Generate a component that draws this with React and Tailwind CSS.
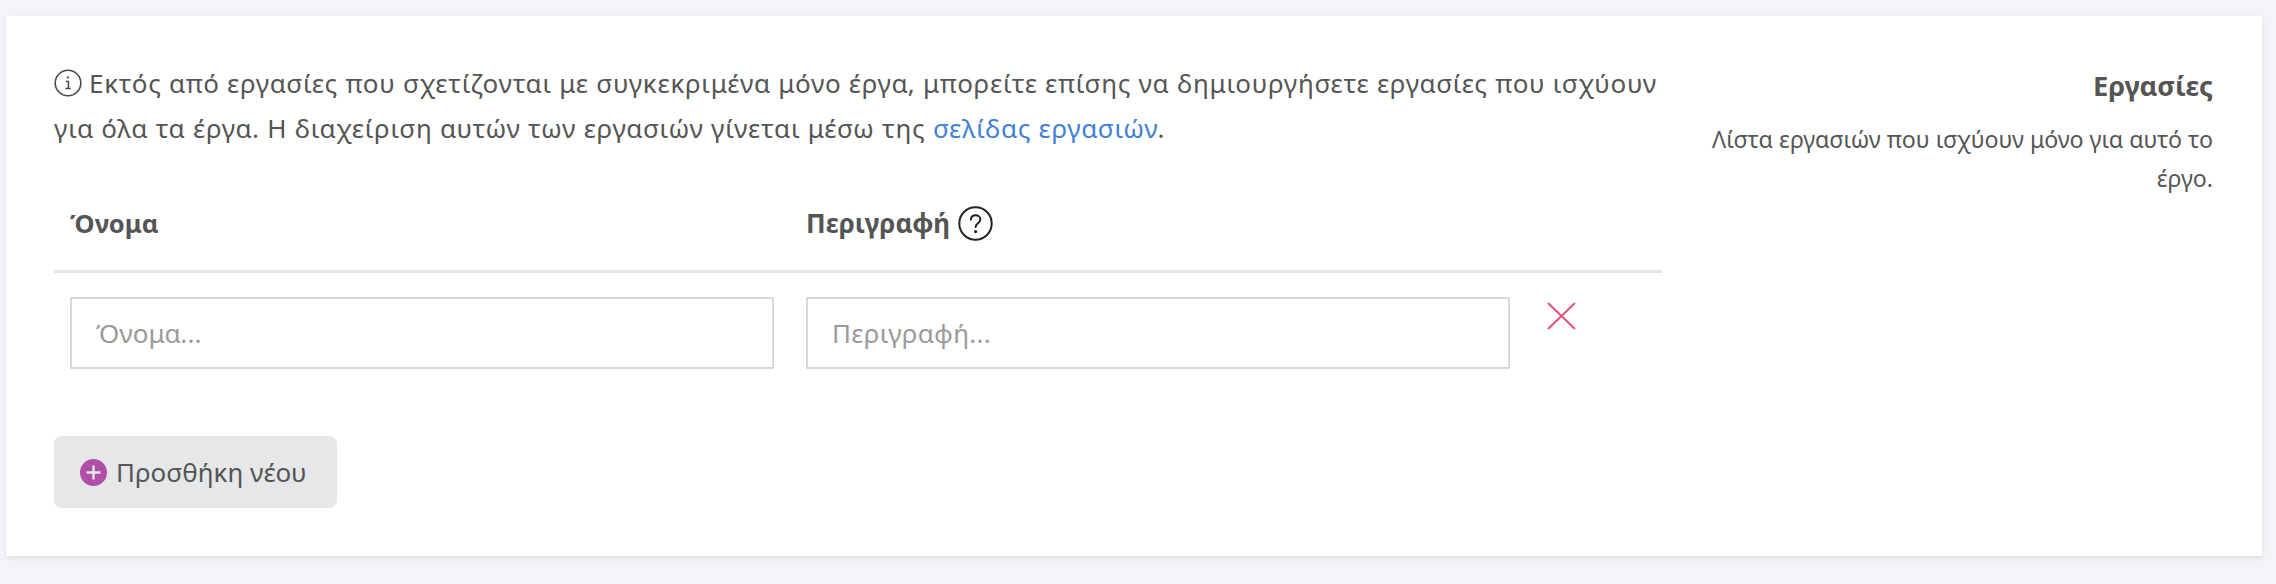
import React from 'react';

const font = { fontFamily: '"Noto Sans", sans-serif' };

function InfoIcon() {
    return (
        <svg viewBox="0 0 28 28" className="w-7 h-7 inline-block align-[-4px] mr-[7px]" fill="none" stroke="#4a4a4a" strokeWidth="1.6">
            <circle cx="14" cy="14" r="12.8" />
            <path d="M11.8 12.400h2.600v7M11.400 19.600h5.400" strokeWidth="1.500" />
            <circle cx="13.800" cy="8.400" r="1.100" fill="#4a4a4a" stroke="none" />
        </svg>
    );
}

function HelpIcon() {
    return (
        <svg viewBox="0 0 35 35" className="w-[35px] h-[35px]" fill="none" stroke="#222" strokeWidth="2">
            <circle cx="17.500" cy="17.500" r="16.200" />
            <path d="M12.800 13.600c.3-2.700 2.200-4.300 4.800-4.300 2.700 0 4.700 1.700 4.700 4.100 0 3.600-4.700 3.900-4.700 7.500" strokeLinecap="round" />
            <circle cx="17.600" cy="25.600" r="1.600" fill="#222" stroke="none" />
        </svg>
    );
}

export default function App() {
    return (
        <div style={font} className="min-h-screen bg-[#f3f4f8] pt-4 pl-[6px] pr-[14px] text-[#555555]">
            <div className="flex h-[540px] bg-white shadow-[0_2px_5px_rgba(0,0,0,0.09)] pt-[45px] pl-12 pr-[49px]">
                <div className="w-[1608px] shrink-0">
                    <p className="text-[26px] leading-[45px] tracking-[0.72px]">
                        <InfoIcon />
                        Εκτός από εργασίες που σχετίζονται με συγκεκριμένα μόνο έργα, μπορείτε επίσης να δημιουργήσετε εργασίες που ισχύουν για όλα τα έργα. Η διαχείριση αυτών των εργασιών γίνεται μέσω της <a className="text-[#3f80d8]">σελίδας εργασιών</a>.
                    </p>
                    <div className="grid grid-cols-[736px_736px_1fr] mt-[33px] border-b-[3px] border-[#e4e4ea] h-[89px]">
                        <div className="pl-4 pt-[21px] text-[25.500px] leading-[36px] font-bold">Όνομα</div>
                        <div className="pl-4 pt-[21px] flex items-center self-start gap-2 text-[26px] leading-[36px] font-bold">
                            Περιγραφή
                            <HelpIcon />
                        </div>
                    </div>
                    <div className="grid grid-cols-[736px_736px_1fr] pt-6">
                        <div className="px-4">
                            <input placeholder="Όνομα..." className="w-full h-[72px] border-2 border-[#d9d9dd] px-6 text-[26px] tracking-[0.1px] placeholder:text-[#9a9a9a] outline-none" />
                        </div>
                        <div className="px-4">
                            <input placeholder="Περιγραφή..." className="w-full h-[72px] border-2 border-[#d9d9dd] px-6 text-[26px] tracking-[0.300px] placeholder:text-[#9a9a9a] outline-none" />
                        </div>
                        <div className="pl-[21px] pt-[5px]">
                            <svg viewBox="0 0 29 28" className="w-[29px] h-7" fill="none" stroke="#e4507a" strokeWidth="2">
                                <path d="M1 1l27 26M28 1L1 27" />
                            </svg>
                        </div>
                    </div>
                    <button className="mt-[67px] flex items-center gap-[9px] h-[72px] w-[283px] pl-[26px] bg-[#e6e7e9] rounded-lg text-[26px]">
                        <svg viewBox="0 0 27 27" className="w-[27px] h-[27px]">
                            <circle cx="13.500" cy="13.500" r="13.500" fill="#b04fa8" />
                            <path d="M13.500 6.500v14M6.500 13.500h14" stroke="#e6e7e9" strokeWidth="2.400" />
                        </svg>
                        Προσθήκη νέου
                    </button>
                </div>
                <div className="flex-1 text-right pt-[7px]">
                    <h3 className="text-[27.300px] leading-[36px] font-bold">Εργασίες</h3>
                    <p className="mt-[16px] ml-auto w-[520px] text-[23.200px] leading-[39px]">Λίστα εργασιών που ισχύουν μόνο για αυτό το έργο.</p>
                </div>
            </div>
        </div>
    );
}
